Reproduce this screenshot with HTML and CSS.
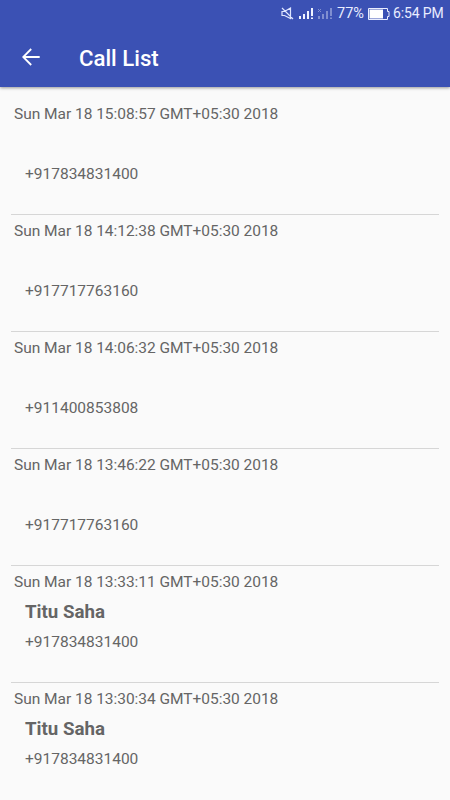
FILE: index.html
```
<!DOCTYPE html>
<html lang="en">
<head>
<meta charset="utf-8">
<title>Call List</title>
<link rel="stylesheet" href="styles.css">
</head>
<body>
<header class="header">
  <div class="status">
    <svg class="mute" width="13" height="13" viewBox="0 0 13 13"><path d="M1 4.5h2.5L9.5 1v10.5L3.5 8.5H1zM1 1l11 11"/></svg>
    <svg class="signal" width="15" height="12" viewBox="0 0 15 12"><path d="M0 8h2v3H0zM4 6h2v5H4zM8 3h2v8H8zM12 0h2v8h-2zM12 9.5h2V11h-2z"/></svg>
    <svg class="signal signal-off" width="15" height="12" viewBox="0 0 15 12"><path d="M0 8h2v3H0zM4 6h2v5H4zM8 3h2v8H8zM12 0h2v8h-2zM12 9.5h2V11h-2zM0 1h1v1H0zM2 1h1v1H2zM1 2h1v1H1zM0 3h1v1H0zM2 3h1v1H2z"/></svg>
    <span class="percent">77%</span>
    <svg class="battery" width="22" height="12" viewBox="0 0 22 12"><path class="case" d="M.5.5h19v3h1.5v5h-1.5v3H.5z"/><path class="charge" d="M1.5 1.5h13.5v9H1.5z"/></svg>
    <span class="clock">6:54 PM</span>
  </div>
  <div class="appbar">
    <svg class="back" width="18" height="18" viewBox="0 0 18 18"><path d="M17.7 9H1.5M9.2 1 1.2 9l8 8"/></svg>
    <h1 class="title">Call List</h1>
  </div>
</header>
<main class="list">
  <article class="call"><p class="date">Sun Mar 18 15:08:57 GMT+05:30 2018</p><h2 class="name"></h2><p class="number">+917834831400</p></article>
  <article class="call"><p class="date">Sun Mar 18 14:12:38 GMT+05:30 2018</p><h2 class="name"></h2><p class="number">+917717763160</p></article>
  <article class="call"><p class="date">Sun Mar 18 14:06:32 GMT+05:30 2018</p><h2 class="name"></h2><p class="number">+911400853808</p></article>
  <article class="call"><p class="date">Sun Mar 18 13:46:22 GMT+05:30 2018</p><h2 class="name"></h2><p class="number">+917717763160</p></article>
  <article class="call"><p class="date">Sun Mar 18 13:33:11 GMT+05:30 2018</p><h2 class="name">Titu Saha</h2><p class="number">+917834831400</p></article>
  <article class="call"><p class="date">Sun Mar 18 13:30:34 GMT+05:30 2018</p><h2 class="name">Titu Saha</h2><p class="number">+917834831400</p></article>
</main>
</body>
</html>
```
FILE: styles.css
```
* { box-sizing: border-box; margin: 0; padding: 0; }
body {
  display: flex;
  flex-direction: column;
  height: 800px;
  overflow: hidden;
  background: #fafafa;
  color: #656565;
  font-family: Roboto, "Liberation Sans", sans-serif;
}
.header {
  flex: none;
  height: 87px;
  background: #3b51b4;
  color: #fff;
  box-shadow: 0 1px 3px rgba(0, 0, 0, .4);
}
.status {
  display: flex;
  align-items: center;
  height: 27px;
  padding-left: 281px;
  font-size: 14px;
  line-height: 27px;
  color: #e9edff;
  white-space: nowrap;
}
.status svg { flex: none; }
.mute { margin-right: 5px; fill: none; stroke: #dfe5ff; stroke-width: 1.2; }
.signal { margin-right: 4px; fill: #f0f3ff; }
.signal-off { opacity: .38; }
.percent { width: 31px; font-size: 14.5px; }
.battery { margin-right: 3px; }
.case { fill: none; stroke: #e9edff; }
.charge { fill: #fff; }
.clock { letter-spacing: -.15px; }
.appbar {
  display: flex;
  align-items: center;
  height: 60px;
  padding-left: 22px;
}
.back { fill: none; stroke: #fff; stroke-width: 1.8; }
.title { margin: 1px 0 0 39px; font-size: 22.2px; font-weight: 500; line-height: 28px; }
.list { padding: 11px 11px 0; }
.call {
  height: 117.1px;
  padding: 5.5px 3px 0;
  border-bottom: 1px solid #d6d6d6;
  white-space: nowrap;
}
.call:last-child { border-bottom: 0; }
.date, .number { font-size: 15.5px; line-height: 20px; }
.date { letter-spacing: -.03px; }
.name { height: 30px; padding: 10.3px 0 0 11px; font-size: 18.7px; font-weight: 700; line-height: 20px; }
.number { padding: 10px 0 0 11px; }
```
